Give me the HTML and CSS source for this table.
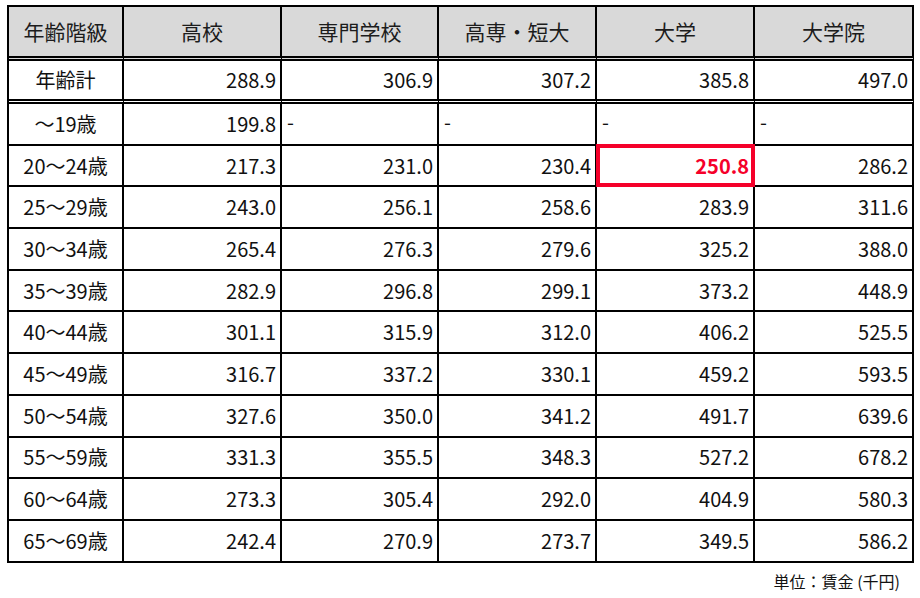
FILE: index.html
```html
<!DOCTYPE html>
<html lang="ja">
<head>
<meta charset="utf-8">
<link rel="stylesheet" href="styles.css">
</head>
<body>
<div class="page">
  <table class="wage">
    <colgroup>
      <col class="c-label"><col class="c2"><col class="c3"><col class="c4"><col class="c5"><col class="c6">
    </colgroup>
    <thead>
      <tr class="head">
        <th>年齢階級</th><th>高校</th><th>専門学校</th><th>高専・短大</th><th>大学</th><th>大学院</th>
      </tr>
    </thead>
    <tbody>
      <tr class="total">
        <td class="label">年齢計</td><td class="num">288.9</td><td class="num">306.9</td><td class="num">307.2</td><td class="num">385.8</td><td class="num">497.0</td>
      </tr>
      <tr>
        <td class="label">～19歳</td><td class="num">199.8</td><td class="dash">-</td><td class="dash">-</td><td class="dash">-</td><td class="dash">-</td>
      </tr>
      <tr>
        <td class="label">20～24歳</td><td class="num">217.3</td><td class="num">231.0</td><td class="num">230.4</td><td class="num hl">250.8</td><td class="num">286.2</td>
      </tr>
      <tr>
        <td class="label">25～29歳</td><td class="num">243.0</td><td class="num">256.1</td><td class="num">258.6</td><td class="num">283.9</td><td class="num">311.6</td>
      </tr>
      <tr>
        <td class="label">30～34歳</td><td class="num">265.4</td><td class="num">276.3</td><td class="num">279.6</td><td class="num">325.2</td><td class="num">388.0</td>
      </tr>
      <tr>
        <td class="label">35～39歳</td><td class="num">282.9</td><td class="num">296.8</td><td class="num">299.1</td><td class="num">373.2</td><td class="num">448.9</td>
      </tr>
      <tr>
        <td class="label">40～44歳</td><td class="num">301.1</td><td class="num">315.9</td><td class="num">312.0</td><td class="num">406.2</td><td class="num">525.5</td>
      </tr>
      <tr>
        <td class="label">45～49歳</td><td class="num">316.7</td><td class="num">337.2</td><td class="num">330.1</td><td class="num">459.2</td><td class="num">593.5</td>
      </tr>
      <tr>
        <td class="label">50～54歳</td><td class="num">327.6</td><td class="num">350.0</td><td class="num">341.2</td><td class="num">491.7</td><td class="num">639.6</td>
      </tr>
      <tr>
        <td class="label">55～59歳</td><td class="num">331.3</td><td class="num">355.5</td><td class="num">348.3</td><td class="num">527.2</td><td class="num">678.2</td>
      </tr>
      <tr>
        <td class="label">60～64歳</td><td class="num">273.3</td><td class="num">305.4</td><td class="num">292.0</td><td class="num">404.9</td><td class="num">580.3</td>
      </tr>
      <tr>
        <td class="label">65～69歳</td><td class="num">242.4</td><td class="num">270.9</td><td class="num">273.7</td><td class="num">349.5</td><td class="num">586.2</td>
      </tr>
    </tbody>
  </table>
  <div class="unit">単位：賃金 (千円)</div>
</div>
</body>
</html>
```
FILE: styles.css
```css
* { box-sizing: border-box; }
html, body { margin: 0; padding: 0; background: #ffffff; }
body {
  font-family: "Noto Sans CJK JP", "Noto Sans", sans-serif;
  color: #111111;
}
.page {
  padding: 5px 0 0 7px;
  width: 920px;
}
.wage {
  border-collapse: separate;
  border-spacing: 0;
  table-layout: fixed;
  width: 907px;
  border-left: 2px solid #000;
  border-top: 2px solid #000;
}
.c-label { width: 115px; }
.c2 { width: 158px; }
.c3 { width: 157px; }
.c4 { width: 158px; }
.c5 { width: 158px; }
.c6 { width: 159px; }
.wage th, .wage td {
  border-right: 2px solid #000;
  border-bottom: 2px solid #000;
  padding: 0;
  line-height: 1;
}
.wage th {
  background: #d9d9d9;
  font-weight: 400;
  font-size: 21px;
  color: #1c1c1c;
  height: 54px;
  border-bottom: 5px double #000;
  text-align: center;
}
.wage td {
  height: 41.7px;
  font-size: 20px;
}
.wage .total td {
  height: 43px;
  border-bottom: 5px double #000;
}
.wage .label { text-align: center; }
.wage .num { text-align: right; padding-right: 4px; }
.wage .dash { text-align: left; padding-left: 5px; padding-bottom: 3px; }
.wage .hl {
  position: relative;
  color: #f5002a;
  font-weight: 700;
  padding-right: 4px;
}
.hl::after {
  content: "";
  position: absolute;
  left: -1px;
  right: -2px;
  top: -2px;
  bottom: -2px;
  border: 4px solid #f5002a;
}
.unit {
  width: 893px;
  text-align: right;
  font-size: 16px;
  margin-top: 6px;
  color: #111;
}
```
